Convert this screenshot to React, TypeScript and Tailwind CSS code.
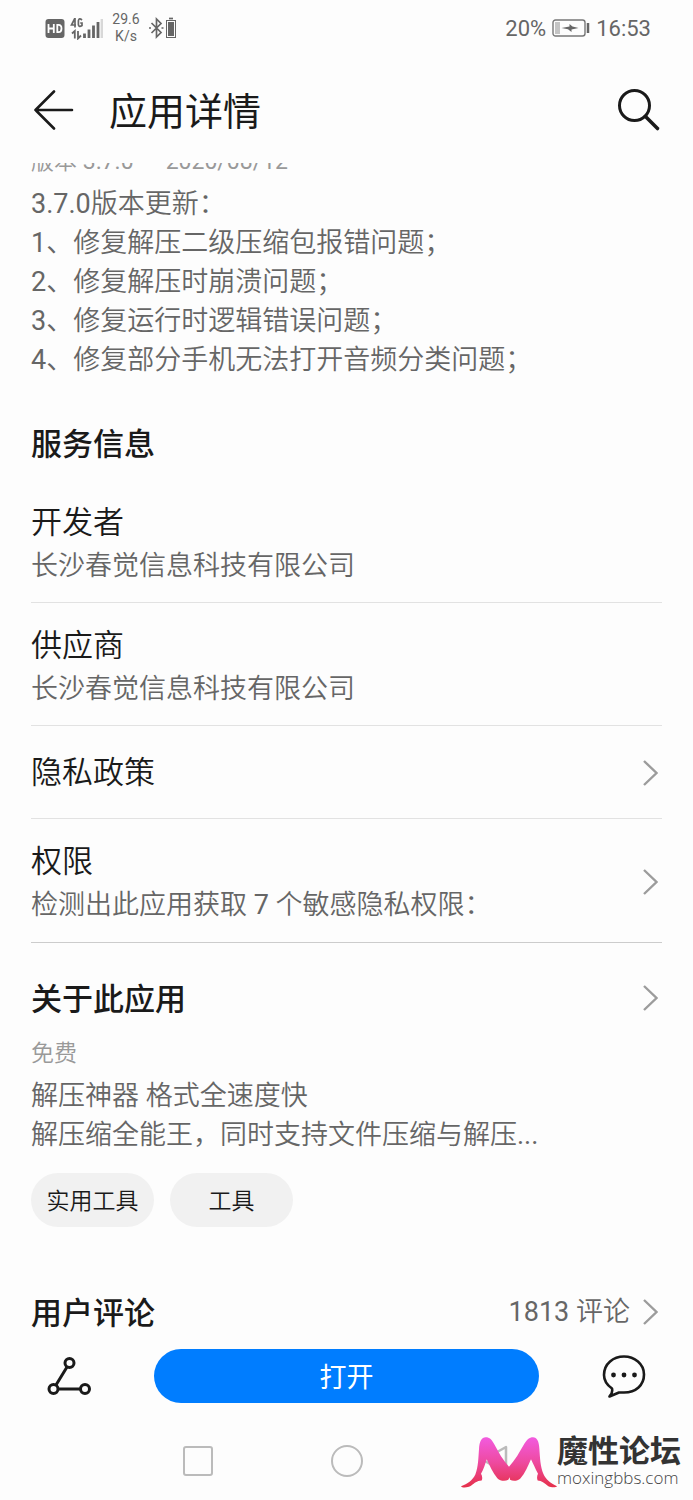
import type { ReactNode } from 'react';
import { twMerge } from 'tailwind-merge';

const changelog = [
  '3.7.0版本更新：',
  '1、修复解压二级压缩包报错问题；',
  '2、修复解压时崩溃问题；',
  '3、修复运行时逻辑错误问题；',
  '4、修复部分手机无法打开音频分类问题；',
];

const tags = ['实用工具', '工具'];

function Chevron() {
  return (
    <svg className="w-4 h-7 shrink-0 mr-1" viewBox="0 0 16 28" fill="none" stroke="#9c9c9c" strokeWidth="2.4">
      <path d="M2 2 14.5 14 2 26" />
    </svg>
  );
}

function Heading({ children, className }: { children: ReactNode; className?: string }) {
  return (
    <h2 className={twMerge("pt-1 text-[31px] leading-[41px] font-medium font-[Roboto,'Noto_Sans_CJK_SC',sans-serif]", className)}>
      {children}
    </h2>
  );
}

function StatusBar() {
  return (
    <div className="h-14 flex items-center justify-between pl-[45px] pr-[42px] text-[#666]">
      <div className="flex items-center">
        <svg className="w-[58px] h-6" viewBox="0 0 58 24">
          <rect x="0.5" y="3" width="19" height="19" rx="3" fill="#666" />
          <path d="M3.5 8v9M8.8 8v9M3.5 12.5h5M12.3 8v9M12 8.9h1.5q3 0 3 3.6t-3 3.6H12" fill="none" stroke="#fff" strokeWidth="1.8" />
          <path d="M30 2v9.5M31 9h-4.5l3.3-6.5M37 4q-3-2.5-3.6.7v4q.6 2.8 3.6.8V7h-1.8" fill="none" stroke="#666" strokeWidth="1.7" />
          <path d="M29.8 22.5V15l-2.8 2.5M33 15v7.5l3-3" fill="none" stroke="#666" strokeWidth="1.8" />
          <path d="M39.5 17.5v4.5M44 13.5v8.5M48.5 9.5v12.5M53 6v16" fill="none" stroke="#666" strokeWidth="2.8" />
          <path d="M56.8 3v19" stroke="#d8d8d8" strokeWidth="2.4" />
        </svg>
        <div className="w-[46px] text-center text-[14px] leading-[17px]">
          <div>29.6</div>
          <div>K/s</div>
        </div>
        <svg className="w-[28px] h-6" viewBox="0 0 28 24" fill="none" stroke="#666" strokeWidth="1.7">
          <path d="M2.5 7 12 16.5 7.5 21V3L12 7.5 2.5 17M0 12h2M12.5 12h2" />
          <path d="M20 2.5h4" />
          <rect x="17.5" y="4.5" width="9" height="17" strokeWidth="1" />
          <rect x="19" y="6" width="6" height="14" fill="#666" stroke="none" />
        </svg>
      </div>
      <div className="flex items-center text-[22px]">
        <span>20%</span>
        <svg className="w-[38px] h-[18px] mx-1.5" viewBox="0 0 38 18">
          <rect x="1" y="1" width="32" height="16" rx="2.5" fill="none" stroke="#777" strokeWidth="1.4" />
          <rect x="3" y="3" width="5" height="12" fill="#c4c4c4" />
          <path d="m9.5 9 8-1.5V5l3 2.5 6 1.5-7 1.5V13L16 10.3Z" fill="#666" />
          <path d="M36 4v10" stroke="#666" strokeWidth="2.5" />
        </svg>
        <span>16:53</span>
      </div>
    </div>
  );
}

function InfoRow({ title, value, link, className }: { title: string; value?: string; link?: boolean; className?: string }) {
  const body: ReactNode = (
    <>
      <div>
        <div className="text-[31px] leading-[45px]">{title}</div>
        {value && <div className="pt-0.5 text-[27px] leading-[38px] text-[#666]">{value}</div>}
      </div>
      {link && <Chevron />}
    </>
  );
  const style = twMerge('flex items-center justify-between border-b border-[#e2e2e2] pt-5 pb-[17px]', className);

  return link ? <a href="#" className={style}>{body}</a> : <div className={style}>{body}</div>;
}

function Watermark() {
  return (
    <div className="absolute right-3 bottom-3 flex items-end">
      <svg className="w-24 h-[51px]" viewBox="0 0 288 152">
        <defs>
          <linearGradient id="legs" x1="0" y1="0" x2="0" y2="1">
            <stop offset="0" stopColor="#f25be0" />
            <stop offset="0.5" stopColor="#ee4aa0" />
            <stop offset="1" stopColor="#e5304a" />
          </linearGradient>
        </defs>
        <path
          d="M0 147C20 140 34 130 43 112C52 88 52 62 54 36C55 12 62 0 74 0C86 0 93 8 99 20C112 44 126 70 144 89C162 70 176 44 190 20C197 8 205 0 216 0C228 0 234 12 235 34C237 62 238 88 247 110C255 128 268 138 288 147C286 151 272 152 262 147C250 138 242 131 230 130C227 122 228 116 231 110C222 92 216 78 210 66C202 84 192 108 178 124C170 132 156 133 147 128L146 120L142 128C132 133 118 132 109 123C95 106 86 84 77 66C73 80 68 96 60 110C64 117 65 124 62 130C47 131 40 138 30 146C20 152 2 152 0 147Z"
          fill="url(#legs)"
        />
      </svg>
      <div className="text-[#333] font-[Roboto,'Noto_Sans_CJK_SC',sans-serif]">
        <div className="text-[31px] leading-[32px] font-bold">魔性论坛</div>
        <div className="font-['Open_Sans'] text-[17px] leading-[20px] font-light text-[#444]">moxingbbs.com</div>
      </div>
    </div>
  );
}

function App() {
  return (
    <div className="relative min-h-screen bg-[#fdfdfd] text-[#1a1a1a] font-[Roboto,'Noto_Sans_CJK_SC_DemiLight','Noto_Sans_CJK_SC',sans-serif] flex flex-col">
      <StatusBar />

      <header className="h-[107px] flex items-center pl-[34px] pr-8">
        <button aria-label="返回">
          <svg className="w-10 h-10" viewBox="0 0 40 40" fill="none" stroke="#1a1a1a" strokeWidth="2.6" strokeLinecap="round" strokeLinejoin="round">
            <path d="M38 20H1.5M20 1.5 1.5 20 20 38.5" />
          </svg>
        </button>
        <h1 className="ml-[35px] grow pt-1 text-[38px] leading-[56px] font-[Roboto,'Noto_Sans_CJK_SC',sans-serif]">应用详情</h1>
        <button aria-label="搜索">
          <svg className="w-11 h-11" viewBox="0 0 44 44" fill="none" stroke="#1a1a1a" strokeWidth="3" strokeLinecap="round">
            <circle cx="17.5" cy="17.5" r="15" />
            <path d="m28.5 28.5 12 12" strokeWidth="3.6" />
          </svg>
        </button>
      </header>

      <main className="px-[31px]">
        <div className="h-3 overflow-hidden flex items-end gap-8 text-[23px] leading-[26px] text-[#999]">
          <span>版本 3.7.0</span>
          <span>2020/08/12</span>
        </div>
        <div className="mt-2.5 text-[27px] leading-[39px] text-[#666]">
          {changelog.map((line) => (
            <p key={line}>{line}</p>
          ))}
        </div>

        <Heading className="mt-10 mb-[15px]">服务信息</Heading>
        <InfoRow title="开发者" value="长沙春觉信息科技有限公司" />
        <InfoRow title="供应商" value="长沙春觉信息科技有限公司" />
        <InfoRow title="隐私政策" link className="pt-6 pb-[23px]" />
        <InfoRow title="权限" value="检测出此应用获取 7 个敏感隐私权限：" link className="pb-[18px] border-[#ccc]" />

        <a href="#" className="mt-8 flex items-center justify-between">
          <Heading>关于此应用</Heading>
          <Chevron />
        </a>
        <p className="mt-[17px] text-[23px] leading-[34px] text-[#999]">免费</p>
        <div className="mt-1.5 text-[27px] leading-[39px] text-[#666]">
          <p>解压神器 格式全速度快</p>
          <p>解压缩全能王，同时支持文件压缩与解压...</p>
        </div>
        <div className="mt-[18px] flex gap-4">
          {tags.map((tag) => (
            <button key={tag} className="w-[123px] h-[54px] pt-1 rounded-full bg-[#f1f1f1] text-[23px]">
              {tag}
            </button>
          ))}
        </div>

        <div className="mt-[62px] flex items-center justify-between">
          <Heading>用户评论</Heading>
          <a href="#" className="flex items-center gap-3 text-[27px] text-[#666]">
            <span className="pt-0.5">1813 评论</span>
            <Chevron />
          </a>
        </div>
      </main>

      <div className="mt-[15px] flex items-center px-[47px]">
        <button aria-label="分享">
          <svg className="w-11 h-10" viewBox="0 0 44 40" fill="none" stroke="#1a1a1a" strokeWidth="3">
            <circle cx="22.5" cy="7" r="4.5" />
            <circle cx="6.5" cy="33" r="4.5" />
            <circle cx="38" cy="33" r="4.5" />
            <path d="M20 11 9 29M11 33h22.5" />
          </svg>
        </button>
        <button className="mx-[63px] h-[54px] grow pt-1 rounded-full bg-[#007dff] text-[27px] text-white font-[Roboto,'Noto_Sans_CJK_SC',sans-serif]">打开</button>
        <button aria-label="评论">
          <svg className="w-11 h-11" viewBox="0 0 44 44" fill="none" stroke="#1a1a1a" strokeWidth="2.6" strokeLinejoin="round">
            <path d="M10 34.5C5 31 2 26 2 21 2 9.5 11.5 2.5 22 2.5S42 10 42 20.5 34 38.5 22 38.5H17L7.5 42.5Q11 39 10 34.5Z" />
            <g fill="#1a1a1a" stroke="none">
              <circle cx="11.5" cy="21" r="2.4" />
              <circle cx="22" cy="21" r="2.4" />
              <circle cx="32.5" cy="21" r="2.4" />
            </g>
          </svg>
        </button>
      </div>

      <nav className="grow flex items-center justify-center gap-[118px] pt-[19px]">
        <button aria-label="最近任务" className="size-[30px] rounded-[3px] border-2 border-[#bbb]" />
        <button aria-label="主屏幕" className="size-8 rounded-full border-2 border-[#bbb]" />
        <button aria-label="后退">
          <svg className="w-[30px] h-8" viewBox="0 0 30 32" fill="none" stroke="#bbb" strokeWidth="2.5" strokeLinejoin="round">
            <path d="M25 2v26L2 15Z" />
          </svg>
        </button>
      </nav>
      <Watermark />
    </div>
  );
}

export default App;
